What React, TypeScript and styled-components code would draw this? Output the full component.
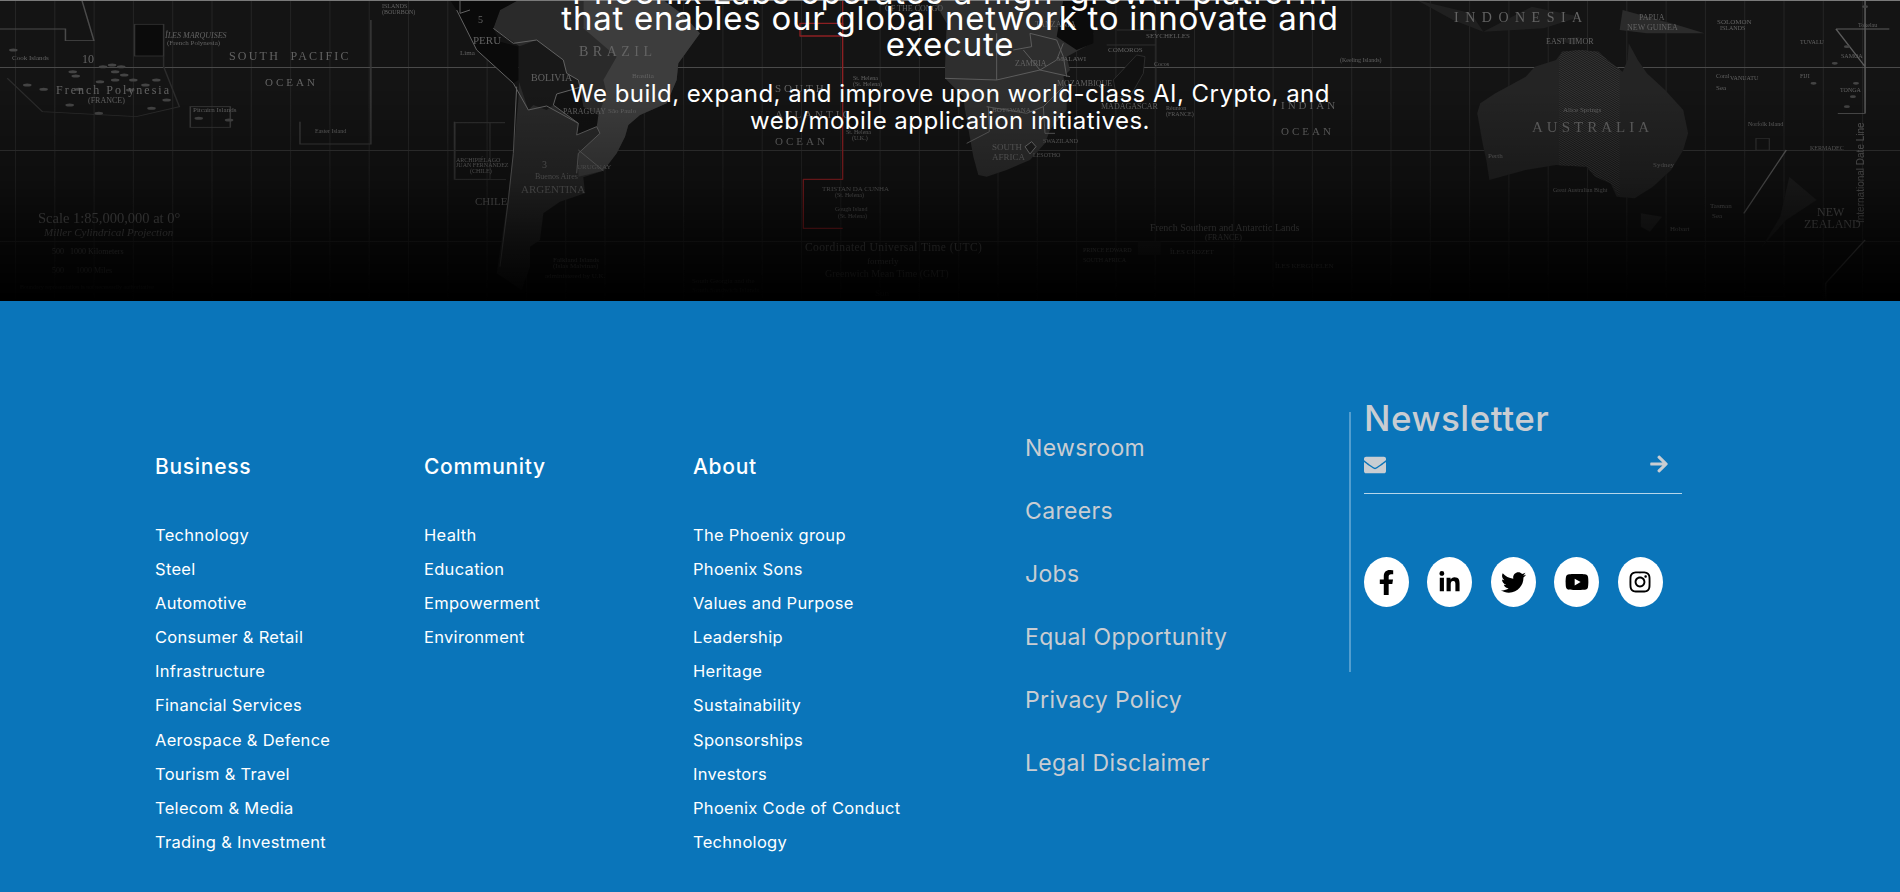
import React from "react";
import styled, { createGlobalStyle } from "styled-components";
import { FaEnvelope, FaArrowRight, FaFacebookF, FaLinkedinIn, FaTwitter, FaYoutube, FaInstagram } from "react-icons/fa";

const GlobalStyle = createGlobalStyle`
  html, body { margin: 0; padding: 0; background: #0a75ba; overflow: hidden; }
  body { font-family: Inter, "Open Sans", sans-serif; }
`;

const Page = styled.div`
  width: 1900px;
  height: 892px;
  display: flex;
  flex-direction: column;
  overflow: hidden;
`;

const Hero = styled.section`
  position: relative;
  height: 301px;
  flex: none;
  overflow: hidden;
  background: #141414;
  color: #fff;
  display: flex;
  flex-direction: column;
  align-items: center;
  text-align: center;
`;

const MapLayer = styled.svg`
  position: absolute;
  inset: 0;
  width: 1900px;
  height: 301px;
  filter: blur(0.35px);
`;

const HeroTitle = styled.h2`
  position: relative;
  margin: -21px 0 0;
  font-size: 33px;
  font-weight: 400;
  line-height: 26px;
  letter-spacing: 0.75px;
  white-space: nowrap;
`;

const HeroText = styled.p`
  position: relative;
  margin: 23px 0 0;
  font-size: 24px;
  font-weight: 400;
  line-height: 27px;
  letter-spacing: 0.48px;
  white-space: nowrap;
`;

const Footer = styled.footer`
  flex: 1;
  background: #0a75ba;
  padding: 111px 0 0 155px;
  display: flex;
  align-items: flex-start;
`;

const MenuColumn = styled.nav`
  width: 269px;
  flex: none;
  padding-top: 40px;
`;

const MenuTitle = styled.h3`
  margin: 0 0 36px;
  font-size: 21px;
  font-weight: 500;
  line-height: 30px;
  letter-spacing: 0.7px;
  color: #fff;
`;

const MenuList = styled.ul`
  margin: 0;
  padding: 0;
  list-style: none;
`;

const MenuItem = styled.li`
  font-size: 16.5px;
  line-height: 34.1px;
  letter-spacing: 0.3px;
  color: #fff;
  white-space: nowrap;
`;

const PageLinks = styled.nav`
  width: 324px;
  flex: none;
  margin-left: 63px;
  padding-top: 5px;
`;

const PageLink = styled.div`
  font-size: 23px;
  line-height: 63px;
  letter-spacing: 0.35px;
  color: #c9cdd2;
  white-space: nowrap;
`;

const NewsColumn = styled.div`
  width: 332px;
  height: 260px;
  flex: none;
  box-sizing: border-box;
  border-left: 2px solid rgba(255, 255, 255, 0.3);
  padding-left: 13px;
`;

const NewsTitle = styled.h3`
  margin: -10px 0 0;
  font-size: 35px;
  font-weight: 500;
  line-height: 33px;
  letter-spacing: 0.5px;
  color: #c9cdd2;
`;

const NewsForm = styled.div`
  margin-top: 11px;
  width: 318px;
  height: 48px;
  box-sizing: border-box;
  border-bottom: 1px solid rgba(255, 255, 255, 0.7);
  padding: 8px 13px 0 0;
  display: flex;
  justify-content: space-between;
  align-items: flex-start;
  color: #c9cdd2;
  font-size: 22px;
`;

const Socials = styled.div`
  margin-top: 63px;
  display: flex;
  gap: 18.4px;
`;

const SocialButton = styled.a`
  width: 45px;
  height: 50px;
  border-radius: 50%;
  background: #fff;
  color: #000;
  display: flex;
  align-items: center;
  justify-content: center;
  font-size: 24px;
`;

type L = [number, number, number, string, number?, boolean?];
const labels: L[] = [
  [165, 38, 8, "ÎLES MARQUISES", 0, true], [167, 45, 7, "(French Polynesia)"], [12, 60, 7, "Cook Islands"], [82, 63, 12, "10"],
  [229, 60, 12, "SOUTH  PACIFIC", 2.2], [265, 86, 11, "OCEAN", 3], [56, 94, 12, "French Polynesia", 2], [88, 103, 8, "(FRANCE)"],
  [193, 112, 7, "Pitcairn Islands"], [315, 133, 6, "Easter Island"], [382, 8, 6, "ISLANDS"], [382, 14, 6, "(BOURBON)"],
  [38, 223, 14.5, "Scale 1:85,000,000 at 0°"], [44, 236, 11, "Miller Cylindrical Projection", 0, true], [52, 254, 8, "500   1000 Kilometers"], [52, 273, 8, "500      1000 Miles"],
  [20, 289, 6, "Boundary representation is not necessarily authoritative"],
  [473, 44, 11, "PERU"], [460, 55, 7, "Lima"], [478, 23, 10, "5"], [579, 56, 14, "BRAZIL", 4.5], [632, 78, 7, "Brasília"],
  [531, 81, 10, "BOLIVIA"], [563, 114, 8, "PARAGUAY"], [608, 113, 7, "São Paulo"], [542, 168, 10, "3"], [535, 179, 8, "Buenos Aires"],
  [521, 193, 11, "ARGENTINA"], [475, 205, 11, "CHILE"], [577, 169, 7, "URUGUAY"], [456, 162, 6, "ARCHIPIÉLAGO"], [456, 167, 6, "JUAN FERNÁNDEZ"], [470, 173, 6, "(CHILE)"],
  [553, 262, 7, "Falkland Islands"], [553, 268, 7, "(Islas Malvinas)"], [545, 278, 7, "administered by U.K."], [692, 283, 7, "South Georgia and the"], [692, 292, 7, "South Sandwich Islands"],
  [775, 92, 11, "SOUTH", 3], [775, 118, 11, "ATLANTIC", 3], [775, 145, 11, "OCEAN", 3], [853, 80, 6, "St. Helena"], [853, 86, 6, "(St. Helena)"], [846, 134, 6, "St. Helena"], [852, 140, 6, "(U.K.)"],
  [822, 191, 7, "TRISTAN DA CUNHA"], [835, 197, 6, "(St. Helena)"], [835, 211, 6, "Gough Island"], [838, 218, 6, "(St. Helena)"],
  [805, 251, 11.5, "Coordinated Universal Time (UTC)", 0.4], [867, 264, 9, "formerly"], [825, 277, 10, "Greenwich Mean Time (GMT)"], [875, 296, 9, "Sun"],
  [885, 11, 8, "OF THE CONGO"], [1035, 27, 8, "TANZANIA"], [1015, 66, 8, "ZAMBIA"], [1057, 61, 7, "MALAWI"], [1057, 86, 8, "MOZAMBIQUE"], [992, 112, 7, "BOTSWANA"],
  [992, 150, 9, "SOUTH"], [992, 160, 9, "AFRICA"], [1033, 157, 6, "LESOTHO"], [1043, 143, 6, "SWAZILAND"], [1101, 109, 8, "MADAGASCAR"], [1146, 38, 7, "SEYCHELLES"],
  [1108, 52, 7, "COMOROS"], [1166, 110, 6, "Réunion"], [1166, 116, 6, "(FRANCE)"], [1281, 109, 11, "INDIAN", 3], [1281, 135, 11, "OCEAN", 3],
  [1150, 231, 10, "French Southern and Antarctic Lands"], [1205, 240, 8, "(FRANCE)"], [1083, 252, 6, "PRINCE EDWARD"], [1083, 262, 6, "SOUTH AFRICA"], [1170, 254, 7, "ÎLES CROZET"], [1275, 268, 7, "ÎLES KERGUELEN"],
  [1154, 66, 6, "Cocos"], [1340, 62, 6, "(Keeling Islands)"],
  [1454, 22, 14, "INDONESIA", 6.5], [1639, 20, 8, "PAPUA"], [1627, 30, 8, "NEW GUINEA"], [1546, 44, 8, "EAST TIMOR"], [1532, 132, 15, "AUSTRALIA", 4], [1563, 112, 7, "Alice Springs"],
  [1488, 158, 7, "Perth"], [1653, 167, 7, "Sydney"], [1553, 192, 6, "Great Australian Bight"], [1670, 231, 7, "Hobart"], [1716, 78, 6, "Coral"], [1716, 90, 7, "Sea"],
  [1717, 24, 7, "SOLOMON"], [1720, 30, 6, "ISLANDS"], [1730, 80, 6, "VANUATU"], [1800, 44, 6, "TUVALU"], [1800, 78, 6, "FIJI"], [1840, 92, 6, "TONGA"], [1841, 58, 6, "SAMOA"], [1858, 27, 6, "Tokelau"],
  [1748, 126, 6, "Norfolk Island"], [1810, 150, 6, "KERMADEC"], [1817, 216, 12, "NEW"], [1804, 228, 12, "ZEALAND"], [1710, 208, 7, "Tasman"], [1712, 218, 7, "Sea"],
];

const range = (n: number) => Array.from({ length: n }, (_, i) => i);
const dots = [[22,150],[120,215],[125,228],[170,200],[185,195],[200,200],[190,215],[205,225],[220,240],[190,240],[165,245],[45,255],[72,268],[130,268],[240,255],[258,240],[215,270],[275,300],[250,325],[115,315],[163,340],[328,355],[378,360]];

const WorldMap = () => (
  <MapLayer viewBox="0 0 1900 301" preserveAspectRatio="none" aria-hidden="true">
    <defs>
      <linearGradient id="fade" x1="0" y1="0" x2="0" y2="1">
        <stop offset="0.3" stopColor="#000" stopOpacity="0" />
        <stop offset="0.6" stopColor="#000" stopOpacity="0.3" />
        <stop offset="0.8" stopColor="#000" stopOpacity="0.68" />
        <stop offset="1" stopColor="#000" stopOpacity="1" />
      </linearGradient>
      <pattern id="hatch" width="4" height="4" patternUnits="userSpaceOnUse" patternTransform="rotate(45)">
        <rect width="4" height="4" fill="#1a1a1a" />
        <rect width="1.6" height="4" fill="#3c3c3c" />
      </pattern>
    </defs>

    {range(48).map((i) => (
      <line key={i} x1={15.5 + i * 39.3} y1="0" x2={15.5 + i * 39.3} y2="301" stroke="#252525" strokeWidth="1" />
    ))}
    <line x1="0" y1="67.5" x2="1900" y2="67.5" stroke="#4a4a4a" />
    <line x1="0" y1="150.5" x2="1900" y2="150.5" stroke="#333" />
    <line x1="0" y1="241.5" x2="1900" y2="241.5" stroke="#2a2a2a" />

    <g transform="scale(0.606 0.3333)" fill="none" stroke="#4a4a4a" strokeWidth="2.5">
      <path d="M0,87 H108 V122 H155 L135,0" />
      <rect x="222" y="73" width="48" height="95" fill="#0b0b0b" stroke="#333" />
      <path d="M12,235 L70,335 L225,350 L296,320 L270,200 V168" stroke="#2c2c2c" />
      <rect x="314" y="320" width="66" height="62" stroke="#3a3a3a" />
      <path d="M495,365 V432 H612 V60" stroke="#383838" />
      <path d="M750,365 V538 H835" stroke="#383838" />
      {dots.map(([x, y]) => (
        <ellipse key={`${x}-${y}`} cx={x} cy={y} rx="7" ry="4.5" fill="#444" stroke="none" />
      ))}
    </g>

    <g transform="translate(450 0) scale(0.33333)" strokeLinejoin="round">
      <path d="M130,85 L150,30 L205,0 L400,0 L400,80 L470,100 L750,100 L685,190 L680,240 L650,310 L570,345 L535,375 L525,410 L500,460 L460,512 L400,532 L405,580 L330,605 L280,640 L270,720 L240,740 L240,800 L215,870 L140,820 L170,620 L190,460 L205,300 L210,140 Z" fill="#2a2a2a" />
      <path d="M400,0 H640 L700,45 L750,100 L685,190 L680,240 L650,310 L570,345 L535,375 L525,410 L500,460 L460,512 L385,530 L385,460 L450,400 L440,380 L445,345 L470,280 L460,240 L500,170 L400,85 Z" fill="#3d3d3d" />
      <path d="M205,140 L260,120 L340,180 L350,220 L385,240 L390,262 L320,282 L310,315 L290,330 L250,315 L235,330 L205,240 Z" fill="#181818" />
      <path d="M310,315 L385,370 L380,405 L440,380 L445,345 L400,320 L390,262 L320,282 Z" fill="#111" />
      <path d="M0,0 L20,30 L80,150 L190,250 L205,240 L205,140 L150,125 L130,85 L150,30 L205,0 Z" fill="#0a0a0a" />
      <path d="M20,30 L80,150 L190,250 L235,330 M130,85 L190,130 L260,120 L340,180 L350,220 L385,240 L390,262 L320,282 L310,315 L385,370 L380,405 L440,380 L450,400 L385,460 L380,520 M235,330 L290,318 L385,370 M385,450 L460,512 M200,260 L190,460 L175,600 L150,800 M30,0 L30,40 L60,30" fill="none" stroke="#626262" strokeWidth="3" />
      <path d="M1050,108 V70 H1178 V108 Z" fill="none" stroke="#8c1f22" strokeWidth="4" />
      <path d="M1178,0 V538 H1060 V685 H1178" fill="none" stroke="#8c1f22" strokeWidth="4" />
      <path d="M15,368 H120 V538 H15 Z M120,368 H165" fill="none" stroke="#333" strokeWidth="3" />
    </g>

    <g transform="translate(850 0) scale(0.33333)" strokeLinejoin="round">
      <path d="M250,0 L290,70 L285,200 L285,235 L340,290 L345,330 L370,470 L385,525 L410,530 L470,510 L540,480 L585,430 L600,390 L650,330 L650,260 L640,230 L660,210 L650,170 L725,130 L730,100 L640,0 Z" fill="#2e2e2e" />
      <path d="M640,0 H730 V130 L680,150 L620,110 Z" fill="#0b0b0b" />
      <path d="M285,235 L440,240 L570,210 L660,230 M440,100 V240 M520,150 L570,210 L620,180 L640,130 M540,100 L620,120 L640,170 L650,230 M415,320 L418,395 L350,430 M530,340 L580,320 L640,260 M540,100 L545,140 L490,150 M580,320 L585,400 L615,400 M410,320 L530,340" fill="none" stroke="#5c5c5c" strokeWidth="3" />
      <path d="M525,440 L545,425 L558,440 L540,462 Z" fill="#1f1f1f" stroke="#707070" strokeWidth="3" />
      <path d="M790,240 L860,165 L885,170 L880,220 L840,290 L800,290 Z" fill="#111" stroke="#3a3a3a" strokeWidth="2" />
      <path d="M800,90 H918 V300 M770,135 H918" fill="none" stroke="#2f2f2f" strokeWidth="3" />
    </g>

    <g transform="translate(950 0) scale(0.606 0.3333)" strokeLinejoin="round">
      <path d="M870,340 L875,310 L900,280 L950,230 L965,200 L1000,180 L1010,155 L1040,150 L1070,155 L1085,180 L1110,215 L1118,180 L1120,130 L1135,180 L1150,220 L1180,270 L1210,330 L1218,400 L1210,450 L1190,510 L1160,560 L1130,595 L1100,590 L1090,550 L1065,530 L1050,500 L1000,495 L950,510 L890,540 L885,480 L880,440 L875,390 Z" fill="#242424" />
      <path d="M1005,176 L1010,155 L1040,150 L1070,155 L1085,180 L1105,208 V590 L1090,550 L1065,530 L1050,500 L1005,496 Z" fill="url(#hatch)" />
      <path d="M1140,640 L1175,650 L1155,695 L1140,680 Z" fill="#242424" />
      <path d="M1385,530 L1430,600 L1380,660 L1340,740 L1370,650 Z" fill="#202020" />
      <path d="M1110,30 L1200,75 L1245,100 L1150,100 L1105,90 Z" fill="#2b2b2b" />
      <path d="M880,95 L960,20 L1040,50 L980,85 Z M770,0 L830,60 L880,95 L860,40 Z M1000,120 L1040,110 L1030,135 Z" fill="#202020" />
      <path d="M1462,87 H1550 M1462,87 L1510,200 V340 H1465 M1510,720 L1445,850 V930 M1510,200 V-10 M1380,450 L1310,640" fill="none" stroke="#5c5c5c" strokeWidth="2.5" />
      <path d="M1310,890 H1380 M1330,415 H1352 V450 H1330 Z" fill="none" stroke="#333" strokeWidth="2" />
      <rect x="310" y="725" width="38" height="40" fill="#1d1d1d" />
      {[[1510,20],[1480,140],[1460,190],[1495,250],[1480,320],[1425,250],[1490,290]].map(([x,y]) => (
        <ellipse key={`${x}:${y}`} cx={x} cy={y} rx="5" ry="4" fill="#444" />
      ))}
    </g>

    <g fontFamily="'Liberation Serif', serif" fill="#636363">
      {labels.map(([x, y, size, text, spacing, italic]) => (
        <text key={`${x}-${y}-${text}`} x={x} y={y} fontSize={size} letterSpacing={spacing || 0} fontStyle={italic ? "italic" : "normal"} xmlSpace="preserve">{text}</text>
      ))}
    </g>
    <text transform="translate(1864 223) rotate(-90)" fontFamily="'Liberation Sans', sans-serif" fontSize="10" fill="#5c5c5c">International Date Line</text>

    <rect x="0" y="0" width="1900" height="301" fill="url(#fade)" />
    <rect x="0" y="0" width="1900" height="1" fill="#7a7a7a" />
  </MapLayer>
);

const business = ["Technology", "Steel", "Automotive", "Consumer & Retail", "Infrastructure", "Financial Services", "Aerospace & Defence", "Tourism & Travel", "Telecom & Media", "Trading & Investment"];
const community = ["Health", "Education", "Empowerment", "Environment"];
const about = ["The Phoenix group", "Phoenix Sons", "Values and Purpose", "Leadership", "Heritage", "Sustainability", "Sponsorships", "Investors", "Phoenix Code of Conduct", "Technology"];
const pages = ["Newsroom", "Careers", "Jobs", "Equal Opportunity", "Privacy Policy", "Legal Disclaimer"];

const Menu = ({ title, items }: { title: string; items: string[] }) => (
  <MenuColumn>
    <MenuTitle>{title}</MenuTitle>
    <MenuList>
      {items.map((item) => (
        <MenuItem key={item}>{item}</MenuItem>
      ))}
    </MenuList>
  </MenuColumn>
);

export default function App() {
  return (
    <Page>
      <GlobalStyle />
      <Hero>
        <WorldMap />
        <HeroTitle>
          Phoenix Labs operates a high-growth platform
          <br />
          that enables our global network to innovate and
          <br />
          execute
        </HeroTitle>
        <HeroText>
          We build, expand, and improve upon world-class AI, Crypto, and
          <br />
          web/mobile application initiatives.
        </HeroText>
      </Hero>
      <Footer>
        <Menu title="Business" items={business} />
        <Menu title="Community" items={community} />
        <Menu title="About" items={about} />
        <PageLinks>
          {pages.map((page) => (
            <PageLink key={page}>{page}</PageLink>
          ))}
        </PageLinks>
        <NewsColumn>
          <NewsTitle>Newsletter</NewsTitle>
          <NewsForm>
            <FaEnvelope />
            <FaArrowRight size={20} />
          </NewsForm>
          <Socials>
            <SocialButton><FaFacebookF size={25} /></SocialButton>
            <SocialButton><FaLinkedinIn size={23} /></SocialButton>
            <SocialButton><FaTwitter size={25} /></SocialButton>
            <SocialButton><FaYoutube size={24} /></SocialButton>
            <SocialButton><FaInstagram size={24} /></SocialButton>
          </Socials>
        </NewsColumn>
      </Footer>
    </Page>
  );
}
